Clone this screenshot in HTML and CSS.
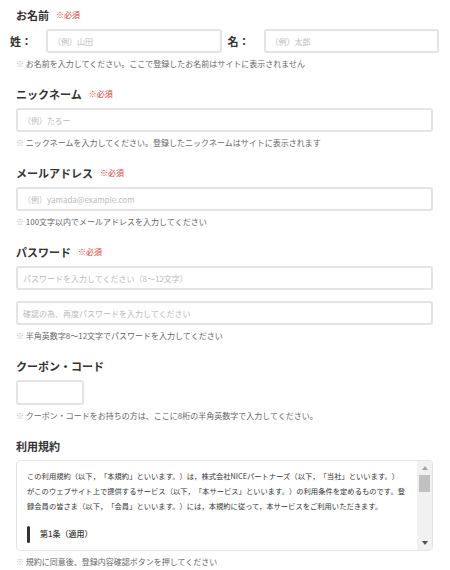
FILE: index.html
```html
<!DOCTYPE html>
<html lang="ja">
  <head>
    <meta charset="utf-8" />
    <meta name="viewport" content="width=device-width, initial-scale=1.0" />
    <title>会員登録</title>
    <link rel="stylesheet" href="styles.css">
  </head>

  <body>
    <form class="form">
      <section class="field">
        <h2 class="label">お名前<span class="req">※必須</span></h2>
        <div class="name-row">
          <label class="name-label" for="sei">姓：</label>
          <input class="input" id="sei" type="text" placeholder="（例）山田" />
          <label class="name-label second" for="mei">名：</label>
          <input class="input" id="mei" type="text" placeholder="（例）太郎" />
        </div>
        <p class="note"><span class="mark">※</span> お名前を入力してください。ここで登録したお名前はサイトに表示されません</p>
      </section>

      <section class="field">
        <h2 class="label">ニックネーム<span class="req">※必須</span></h2>
        <input class="input" type="text" placeholder="（例）たろー" />
        <p class="note"><span class="mark">※</span> ニックネームを入力してください。登録したニックネームはサイトに表示されます</p>
      </section>

      <section class="field">
        <h2 class="label">メールアドレス<span class="req">※必須</span></h2>
        <input class="input" type="email" placeholder="（例）yamada@example.com" />
        <p class="note"><span class="mark">※</span> 100文字以内でメールアドレスを入力してください</p>
      </section>

      <section class="field">
        <h2 class="label">パスワード<span class="req">※必須</span></h2>
        <input class="input" type="password" placeholder="パスワードを入力してください（8〜12文字）" />
        <input class="input" type="password" placeholder="確認の為、再度パスワードを入力してください" />
        <p class="note"><span class="mark">※</span> 半角英数字8〜12文字でパスワードを入力してください</p>
      </section>

      <section class="field">
        <h2 class="label">クーポン・コード</h2>
        <input class="input coupon" type="text" />
        <p class="note"><span class="mark">※</span> クーポン・コードをお持ちの方は、ここに8桁の半角英数字で入力してください。</p>
      </section>

      <section class="field">
        <h2 class="label">利用規約</h2>
        <div class="terms">
          <div class="terms-body">
            <p>この利用規約（以下，「本規約」といいます。）は，株式会社NICEパートナーズ（以下，「当社」といいます。）<br>がこのウェブサイト上で提供するサービス（以下，「本サービス」といいます。）の利用条件を定めるものです。登録会員の皆さま（以下，「会員」といいます。）には，本規約に従って，本サービスをご利用いただきます。</p>
            <h3 class="article">第1条（適用）</h3>
            <p>本規約は，会員と当社との間の本サービスの利用に関わる一切の関係に適用されるものとします。</p>
          </div>
          <div class="scrollbar">
            <span class="arrow up"></span>
            <span class="thumb"></span>
            <span class="arrow down"></span>
          </div>
        </div>
        <p class="note"><span class="mark">※</span> 規約に同意後、登録内容確認ボタンを押してください</p>
      </section>
    </form>
  </body>
</html>
```

FILE: styles.css
```css
* {
  box-sizing: border-box;
}

body {
  margin: 0;
  font-family: "Noto Sans CJK JP", "Noto Sans", sans-serif;
  color: #333;
  background: #fff;
  text-spacing-trim: space-all;
}

.form {
  padding: 7px 17px 0 16px;
}

.field {
  margin-bottom: 16px;
}

.label {
  display: flex;
  align-items: center;
  gap: 7px;
  margin: 0 0 6px;
  font-size: 11px;
  line-height: 16px;
  font-weight: bold;
}

.req {
  color: #e53935;
  font-size: 8px;
  font-weight: normal;
}

.input {
  display: block;
  width: 100%;
  height: 24px;
  padding: 0 5px;
  border: 2px solid #e4e4e4;
  border-radius: 3px;
  font-family: "Noto Sans CJK JP", sans-serif;
  font-size: 8px;
  color: #333;
  text-spacing-trim: space-all;
}

.input::placeholder {
  color: #bbb;
}

.input + .input {
  margin-top: 11px;
}

.coupon {
  width: 68px;
  height: 25px;
}

.name-row {
  display: flex;
  align-items: center;
  margin: 0 -6px;
}

.name-row .input {
  flex: 1;
  min-width: 0;
}

.name-label {
  flex: none;
  width: 36px;
  font-size: 11px;
  font-weight: bold;
}

.name-label.second {
  margin-left: 6px;
}

.note {
  margin: 5px 0 0;
  font-size: 8px;
  line-height: 12px;
  color: #666;
}

.mark {
  color: #bbb;
}

.terms {
  display: flex;
  height: 91px;
  border: 1px solid #e4e4e4;
  border-radius: 4px;
  overflow: hidden;
}

.terms-body {
  flex: 1;
  overflow: hidden;
  padding: 8px 9px 0 10px;
  font-size: 7.3px;
  line-height: 15px;
}

.terms-body p {
  margin: 0;
}

.article {
  display: flex;
  align-items: center;
  gap: 10px;
  margin: 11px 0 5px;
  font-size: 8px;
  font-weight: 500;
  line-height: 18px;
}

.article::before {
  content: "";
  width: 3px;
  height: 17px;
  border-radius: 2px;
  background: #333;
}

.scrollbar {
  display: flex;
  flex-direction: column;
  align-items: center;
  width: 15px;
  background: #f1f1f1;
}

.arrow {
  display: flex;
  align-items: center;
  justify-content: center;
  height: 14px;
}

.arrow::before {
  content: "";
  border-left: 3.5px solid transparent;
  border-right: 3.5px solid transparent;
}

.arrow.up::before {
  border-bottom: 4px solid #a3a3a3;
}

.arrow.down {
  margin-top: auto;
}

.arrow.down::before {
  border-top: 4px solid #505050;
}

.thumb {
  width: 11px;
  height: 17px;
  background: #c1c1c1;
}
```
